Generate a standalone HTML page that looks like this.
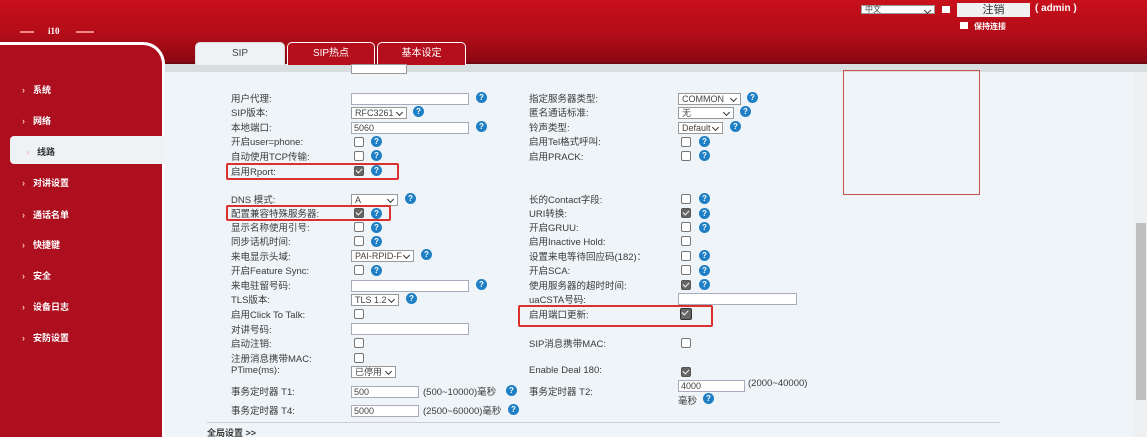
<!DOCTYPE html>
<html><head><meta charset="utf-8"><style>
*{margin:0;padding:0;box-sizing:border-box}
body{width:1147px;height:448px;overflow:hidden;background:#fff;position:relative;font-family:"Liberation Sans","Noto Sans CJK SC",sans-serif;font-size:9.5px;color:#333}
.a{position:absolute;white-space:nowrap}
#hdr{left:0;top:0;width:1147px;height:64px;background:linear-gradient(#c8101c,#b00c18 60%,#8a0812);border-bottom:2px solid #6e0510}
#band{left:163px;top:64px;width:984px;height:8px;background:#d8dde0}
#content{left:163px;top:72px;width:970px;height:365px;background:#eef4f7}
#side{left:0;top:42px;width:165px;height:395px;background:#ad0f1f;border-top:3px solid #fff;border-right:3px solid #fff;border-top-right-radius:22px}
.nav{color:#fff;font-weight:bold;font-size:9px;left:22px}
.nav:before{content:"›";margin-right:8px;color:#f3c0c0}
.tab{top:42px;height:23px;border:1px solid #fff;border-bottom:none;border-radius:5px 5px 0 0;background:#b50e1c;color:#fff;text-align:center;line-height:22px;font-size:10px}
.l{font-size:9.5px;color:#3a3a3a;transform:translateY(-2px)}
.cb{width:10px;height:10px;border:1px solid #777;background:#fff;border-radius:2px}
.cc{background:#666;border-color:#555}
.cc:after{content:"";position:absolute;left:2px;top:0px;width:3px;height:5px;border:solid #fff;border-width:0 1.5px 1.5px 0;transform:rotate(45deg)}
.q{width:11px;height:11px;border-radius:50%;background:#1f7fc5;color:#fff;font-size:8px;font-weight:bold;text-align:center;line-height:11px}
.in{height:12px;border:1px solid #aab;background:#fff;font-size:9px;line-height:10px;padding-left:2px;color:#444}
.sel{height:12px;border:1px solid #999;background:#fff;font-size:9px;line-height:10px;padding-left:3px;color:#444}
.sel:after{content:"";position:absolute;right:4px;top:2px;width:4px;height:4px;border:solid #333;border-width:0 1.2px 1.2px 0;transform:rotate(45deg)}
.rb{border:2px solid #d9312d;border-radius:2px}
</style></head><body>
<div class="a" id="hdr"></div>
<div class="a" id="band"></div>
<div class="a" id="content"></div>
<div class="a" id="side"></div>
<div class="a" style="left:20px;top:31px;width:14px;height:2px;background:#e88"></div>
<div class="a" style="left:48px;top:26px;color:#fff;font-weight:bold;font-size:9px;font-family:'Liberation Serif',serif">i10</div>
<div class="a" style="left:76px;top:31px;width:18px;height:2px;background:#e88"></div>
<!-- top right -->
<div class="a sel" style="left:861px;top:5px;width:74px;height:9px;font-size:8px;line-height:8px">中文</div>
<div class="a" style="left:942px;top:6px;width:8px;height:7px;background:#fff"></div>
<div class="a" style="left:957px;top:3px;width:73px;height:14px;background:#f0f0f0;color:#333;text-align:center;font-size:11px;line-height:14px">注销</div>
<div class="a" style="left:1035px;top:3px;color:#fff;font-weight:bold;font-size:10px">( admin )</div>
<div class="a" style="left:960px;top:22px;width:8px;height:7px;background:#fff"></div>
<div class="a" style="left:974px;top:21px;color:#fff;font-weight:bold;font-size:8px">保持连接</div>
<!-- tabs -->
<div class="a tab" style="left:195px;width:90px;background:#eef2f5;color:#444;border-color:#ddd">SIP</div>
<div class="a tab" style="left:287px;width:88px">SIP热点</div>
<div class="a tab" style="left:377px;width:89px">基本设定</div>
<!-- nav -->
<div class="a nav" style="top:83px">系统</div>
<div class="a nav" style="top:114px">网络</div>
<div class="a" style="left:10px;top:136px;width:155px;height:28px;background:#eef2f5;border-radius:4px 0 0 4px"></div>
<div class="a nav" style="left:26px;top:145px;color:#333">线路</div>
<div class="a nav" style="top:176px">对讲设置</div>
<div class="a nav" style="top:208px">通话名单</div>
<div class="a nav" style="top:238px">快捷键</div>
<div class="a nav" style="top:269px">安全</div>
<div class="a nav" style="top:300px">设备日志</div>
<div class="a nav" style="top:331px">安防设置</div>
<!-- right box / scrollbar -->
<div class="a" style="left:843px;top:70px;width:137px;height:125px;border:1px solid #c8504a"></div>
<div class="a" style="left:1133px;top:72px;width:14px;height:365px;background:#eef0f1"></div>
<div class="a" style="left:1136px;top:223px;width:10px;height:177px;background:#c0c0c0"></div>
<div class="a" style="left:351px;top:64px;width:56px;height:10px;border:1px solid #999;background:#fff"></div>
<!-- left column -->
<div class="a l" style="left:231px;top:93px">用户代理:</div><div class="a in" style="left:351px;top:93px;width:118px"></div><div class="a q" style="left:476px;top:92px">?</div>
<div class="a l" style="left:231px;top:107px">SIP版本:</div><div class="a sel" style="left:351px;top:107px;width:56px">RFC3261</div><div class="a q" style="left:413px;top:106px">?</div>
<div class="a l" style="left:231px;top:122px">本地端口:</div><div class="a in" style="left:351px;top:122px;width:118px">5060</div><div class="a q" style="left:476px;top:121px">?</div>
<div class="a l" style="left:231px;top:136px">开启user=phone:</div><div class="a cb" style="left:354px;top:137px"></div><div class="a q" style="left:371px;top:136px">?</div>
<div class="a l" style="left:231px;top:151px">自动使用TCP传输:</div><div class="a cb" style="left:354px;top:151px"></div><div class="a q" style="left:371px;top:150px">?</div>
<div class="a l" style="left:231px;top:166px">启用Rport:</div><div class="a cb cc" style="left:354px;top:166px"></div><div class="a q" style="left:371px;top:165px">?</div>
<div class="a rb" style="left:226px;top:163px;width:173px;height:17px"></div>
<div class="a l" style="left:231px;top:194px">DNS 模式:</div><div class="a sel" style="left:351px;top:194px;width:47px">A</div><div class="a q" style="left:405px;top:193px">?</div>
<div class="a l" style="left:231px;top:208px">配置兼容特殊服务器:</div><div class="a cb cc" style="left:354px;top:208px"></div><div class="a q" style="left:371px;top:208px">?</div>
<div class="a rb" style="left:226px;top:205px;width:165px;height:16px"></div>
<div class="a l" style="left:231px;top:222px">显示名称使用引号:</div><div class="a cb" style="left:354px;top:222px"></div><div class="a q" style="left:371px;top:222px">?</div>
<div class="a l" style="left:231px;top:236px">同步话机时间:</div><div class="a cb" style="left:354px;top:236px"></div><div class="a q" style="left:371px;top:236px">?</div>
<div class="a l" style="left:231px;top:251px">来电显示头域:</div><div class="a sel" style="left:351px;top:250px;width:63px">PAI-RPID-F</div><div class="a q" style="left:421px;top:249px">?</div>
<div class="a l" style="left:231px;top:265px">开启Feature Sync:</div><div class="a cb" style="left:354px;top:265px"></div><div class="a q" style="left:371px;top:265px">?</div>
<div class="a l" style="left:231px;top:280px">来电驻留号码:</div><div class="a in" style="left:351px;top:280px;width:118px"></div><div class="a q" style="left:476px;top:279px">?</div>
<div class="a l" style="left:231px;top:294px">TLS版本:</div><div class="a sel" style="left:351px;top:294px;width:48px">TLS 1.2</div><div class="a q" style="left:406px;top:293px">?</div>
<div class="a l" style="left:231px;top:309px">启用Click To Talk:</div><div class="a cb" style="left:354px;top:309px"></div>
<div class="a l" style="left:231px;top:324px">对讲号码:</div><div class="a in" style="left:351px;top:323px;width:118px"></div>
<div class="a l" style="left:231px;top:338px">启动注销:</div><div class="a cb" style="left:354px;top:338px"></div>
<div class="a l" style="left:231px;top:353px">注册消息携带MAC:</div><div class="a cb" style="left:354px;top:353px"></div>
<div class="a l" style="left:231px;top:367px">PTime(ms):</div><div class="a sel" style="left:351px;top:366px;width:45px">已停用</div>
<div class="a l" style="left:231px;top:386px">事务定时器 T1:</div><div class="a in" style="left:351px;top:386px;width:68px">500</div><div class="a l" style="left:423px;top:386px">(500~10000)毫秒</div><div class="a q" style="left:506px;top:385px">?</div>
<div class="a l" style="left:231px;top:405px">事务定时器 T4:</div><div class="a in" style="left:351px;top:405px;width:68px">5000</div><div class="a l" style="left:423px;top:405px">(2500~60000)毫秒</div><div class="a q" style="left:508px;top:404px">?</div>
<div class="a" style="left:207px;top:422px;width:793px;height:1px;background:#ccd"></div>
<div class="a l" style="left:207px;top:428px;font-weight:bold;font-size:9px">全局设置 &gt;&gt;</div>
<!-- right column -->
<div class="a l" style="left:529px;top:93px">指定服务器类型:</div><div class="a sel" style="left:678px;top:93px;width:63px">COMMON</div><div class="a q" style="left:747px;top:92px">?</div>
<div class="a l" style="left:529px;top:107px">匿名通话标准:</div><div class="a sel" style="left:678px;top:107px;width:56px">无</div><div class="a q" style="left:740px;top:106px">?</div>
<div class="a l" style="left:529px;top:122px">铃声类型:</div><div class="a sel" style="left:678px;top:122px;width:45px">Default</div><div class="a q" style="left:730px;top:121px">?</div>
<div class="a l" style="left:529px;top:136px">启用Tel格式呼叫:</div><div class="a cb" style="left:681px;top:137px"></div><div class="a q" style="left:699px;top:136px">?</div>
<div class="a l" style="left:529px;top:151px">启用PRACK:</div><div class="a cb" style="left:681px;top:151px"></div><div class="a q" style="left:699px;top:150px">?</div>
<div class="a l" style="left:529px;top:194px">长的Contact字段:</div><div class="a cb" style="left:681px;top:194px"></div><div class="a q" style="left:699px;top:193px">?</div>
<div class="a l" style="left:529px;top:208px">URI转换:</div><div class="a cb cc" style="left:681px;top:208px"></div><div class="a q" style="left:699px;top:208px">?</div>
<div class="a l" style="left:529px;top:222px">开启GRUU:</div><div class="a cb" style="left:681px;top:222px"></div><div class="a q" style="left:699px;top:222px">?</div>
<div class="a l" style="left:529px;top:236px">启用Inactive Hold:</div><div class="a cb" style="left:681px;top:236px"></div>
<div class="a l" style="left:529px;top:251px">设置来电等待回应码(182)：</div><div class="a cb" style="left:681px;top:251px"></div><div class="a q" style="left:699px;top:250px">?</div>
<div class="a l" style="left:529px;top:265px">开启SCA:</div><div class="a cb" style="left:681px;top:265px"></div><div class="a q" style="left:699px;top:265px">?</div>
<div class="a l" style="left:529px;top:280px">使用服务器的超时时间:</div><div class="a cb cc" style="left:681px;top:280px"></div><div class="a q" style="left:699px;top:279px">?</div>
<div class="a l" style="left:529px;top:294px">uaCSTA号码:</div><div class="a in" style="left:678px;top:293px;width:119px"></div>
<div class="a l" style="left:529px;top:309px">启用端口更新:</div><div class="a cb cc" style="left:680px;top:308px;width:12px;height:12px;border:1.5px solid #333"></div>
<div class="a rb" style="left:518px;top:305px;width:195px;height:22px"></div>
<div class="a l" style="left:529px;top:338px">SIP消息携带MAC:</div><div class="a cb" style="left:681px;top:338px"></div>
<div class="a l" style="left:529px;top:367px">Enable Deal 180:</div><div class="a cb cc" style="left:681px;top:367px"></div>
<div class="a in" style="left:678px;top:380px;width:67px">4000</div><div class="a l" style="left:748px;top:380px">(2000~40000)</div>
<div class="a l" style="left:529px;top:386px">事务定时器 T2:</div>
<div class="a l" style="left:678px;top:395px">毫秒</div><div class="a q" style="left:703px;top:393px">?</div>
</body></html>
